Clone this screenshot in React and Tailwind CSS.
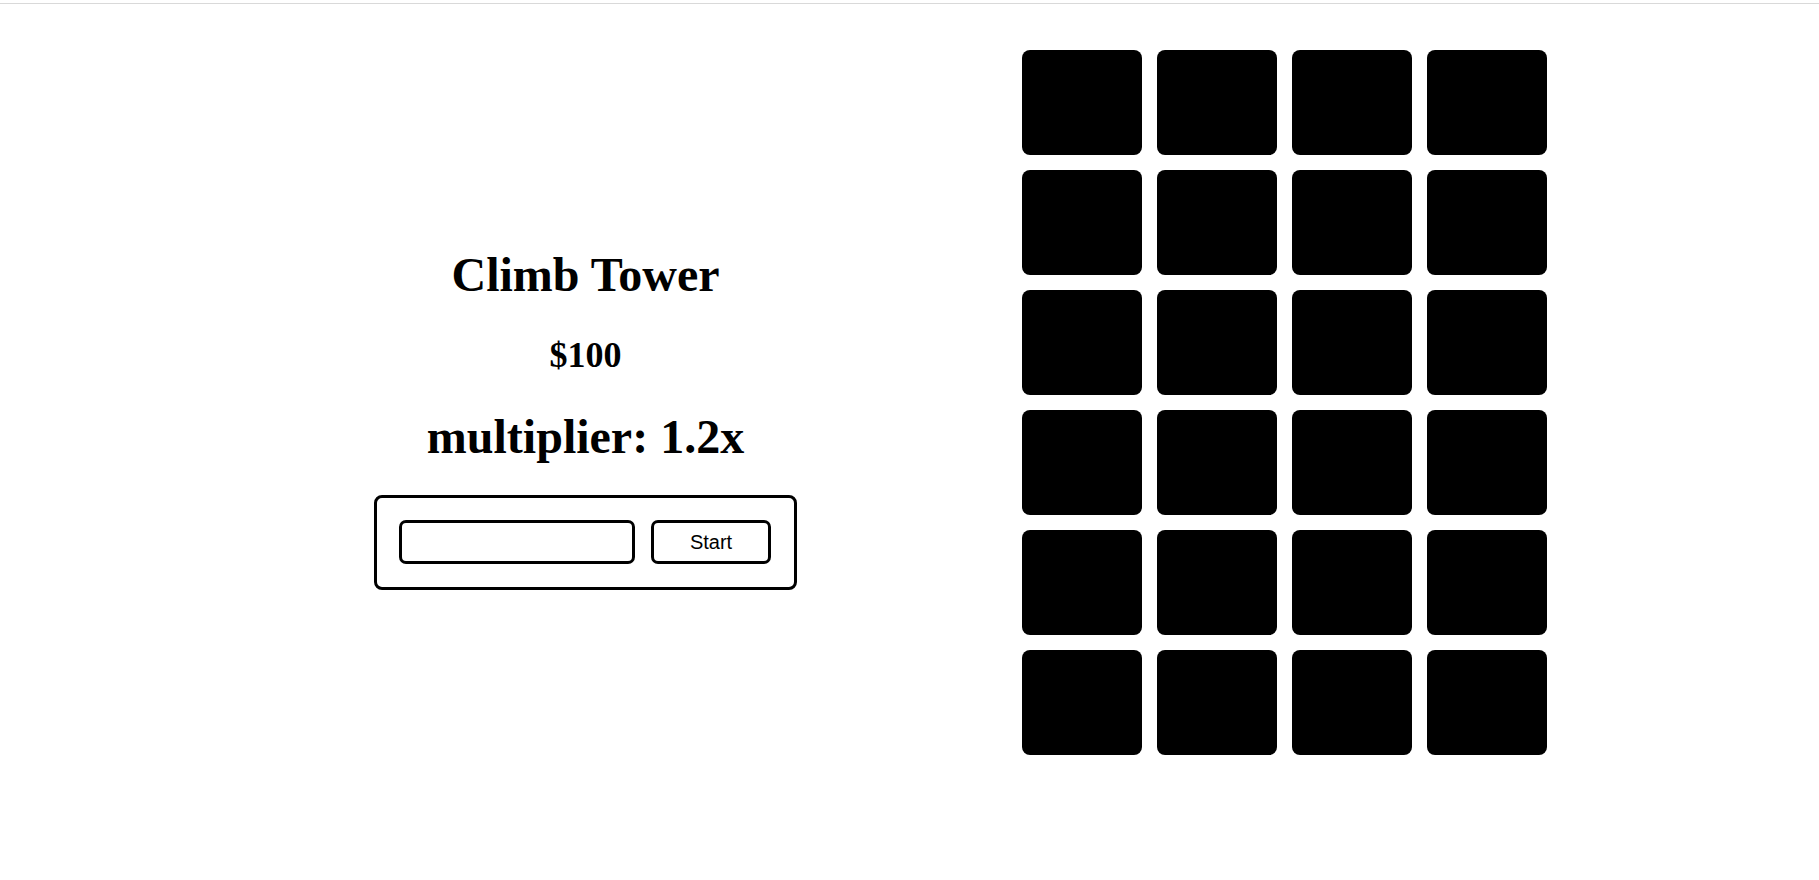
import React from 'react';

const ROWS = 6;
const COLS = 4;

const Tile = () => <div className="h-[105px] w-[120px] rounded-lg bg-black" />;

const App = () => {
  const tiles = Array.from({ length: ROWS * COLS }, (_, i) => i);

  return (
    <div className="min-h-screen w-full bg-white pt-[3px]">
      <div className="border-t border-[#d9d9d9]" />

      <div className="flex items-start pl-[374px]">
        {/* Left: game controls */}
        <div
          className="flex w-[423px] flex-col items-center pt-[244px] text-black"
          style={{ fontFamily: '"Liberation Serif", "Times New Roman", serif' }}
        >
          <h1 className="text-[48px] font-bold leading-[53px]">Climb Tower</h1>
          <h2 className="mt-[34px] text-[36px] font-bold leading-[40px]">$100</h2>
          <h1 className="mt-[35px] text-[48px] font-bold leading-[53px]">multiplier: 1.2x</h1>

          <div className="mt-[32px] flex h-[95px] w-[423px] items-start gap-[16px] rounded-[8px] border-[3px] border-black pl-[22px] pt-[22px]">
            <input
              type="text"
              className="h-[44px] w-[236px] rounded-[7px] border-[3px] border-black bg-white px-2 outline-none"
            />
            <button
              className="h-[44px] w-[120px] rounded-[7px] border-[3px] border-black bg-white text-[20px] text-black"
              style={{ fontFamily: '"Liberation Sans", Arial, sans-serif' }}
            >
              Start
            </button>
          </div>
        </div>

        {/* Right: tower grid */}
        <div className="ml-[225px] mt-[46px] grid grid-cols-[repeat(4,120px)] gap-[15px]">
          {tiles.map(i => (
            <Tile key={i} />
          ))}
        </div>
      </div>
    </div>
  );
};

export default App;
